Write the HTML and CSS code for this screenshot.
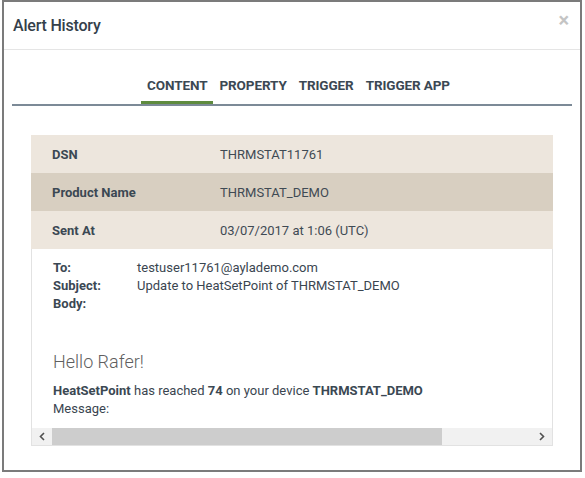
FILE: index.html
```html
<!DOCTYPE html>
<html lang="en">
<head>
    <meta charset="UTF-8">
    <title>Alert History</title>
    <link rel="stylesheet" href="styles.css">
</head>
<body>
    <div class="modal">
        <div class="modal-header">
            <h2>Alert History</h2>
            <span class="close">&times;</span>
        </div>

        <div class="modal-body">
            <!-- tabs -->
            <ul class="tabs">
                <li class="active">CONTENT</li>
                <li>PROPERTY</li>
                <li>TRIGGER</li>
                <li>TRIGGER APP</li>
            </ul>

            <div class="details">
                <div class="row">
                    <div class="label">DSN</div>
                    <div class="value">THRMSTAT11761</div>
                </div>
                <div class="row dark">
                    <div class="label">Product Name</div>
                    <div class="value">THRMSTAT_DEMO</div>
                </div>
                <div class="row">
                    <div class="label">Sent At</div>
                    <div class="value">03/07/2017 at 1:06 (UTC)</div>
                </div>

                <!-- email preview -->
                <div class="email">
                    <div class="email-content">
                        <div class="field"><span class="f-label">To:</span><span>testuser11761@aylademo.com</span></div>
                        <div class="field"><span class="f-label">Subject:</span><span>Update to HeatSetPoint of THRMSTAT_DEMO</span></div>
                        <div class="field"><span class="f-label">Body:</span></div>

                        <div class="greeting">Hello Rafer!</div>
                        <p class="line"><strong>HeatSetPoint</strong> has reached <strong>74</strong> on your device <strong>THRMSTAT_DEMO</strong></p>
                        <p class="line">Message:</p>
                    </div>
                    <div class="scrollbar">
                        <div class="arrow">
                            <svg width="6" height="9" viewBox="0 0 6 9"><polyline points="5,1 1.5,4.5 5,8" fill="none" stroke="#505050" stroke-width="1.6"/></svg>
                        </div>
                        <div class="track"><div class="thumb"></div></div>
                        <div class="arrow">
                            <svg width="6" height="9" viewBox="0 0 6 9"><polyline points="1,1 4.5,4.5 1,8" fill="none" stroke="#505050" stroke-width="1.6"/></svg>
                        </div>
                    </div>
                </div>
            </div>
        </div>
    </div>
</body>
</html>
```

FILE: styles.css
```css
body {
    margin: 0;
    background: #fff;
    font-family: 'Roboto', 'Liberation Sans', sans-serif;
    color: #3a4550;
}
.modal {
    margin-left: 2px;
    width: 580px;
    height: 472px;
    border: 2px solid #7b7b7b;
    box-sizing: border-box;
    background: #fff;
}
.modal-header {
    height: 47px;
    padding: 0 9px;
    border-bottom: 1px solid #e5e5e5;
    display: flex;
    align-items: center;
    justify-content: space-between;
}
.modal-header h2 {
    margin: 0;
    font-size: 16px;
    font-weight: 500;
    color: #34404a;
    letter-spacing: -0.2px;
}
.close {
    font-size: 20px;
    font-weight: bold;
    color: #c4c4c4;
    margin-top: -11px;
    margin-right: 2px;
}
.modal-body {
    padding: 0 8px;
}
.tabs {
    list-style: none;
    margin: 0;
    padding: 26px 0 0 13px;
    display: flex;
    justify-content: center;
    border-bottom: 2px solid #7c8a97;
}
.tabs li {
    padding: 0 6px 7px;
    font-size: 13.5px;
    line-height: 18px;
    font-weight: bold;
    letter-spacing: -0.1px;
    color: #3b4853;
    border-bottom: 3px solid transparent;
}
.tabs li.active {
    border-bottom-color: #5e8b3e;
}
.details {
    margin: 29px 19px 0;
    font-size: 13px;
}
.row {
    display: flex;
    height: 38px;
    align-items: center;
    background: #ede6dd;
}
.row.dark {
    background: #d8cfc1;
}
.label {
    width: 168px;
    padding-left: 21px;
    font-weight: bold;
    color: #3b4853;
}
.value {
    color: #3f4a54;
}
.email {
    border: 1px solid #e2e2e2;
    border-top: none;
}
.email-content {
    padding: 10px 21px 10px;
    line-height: 18px;
}
.field {
    display: flex;
}
.f-label {
    width: 84px;
    font-weight: bold;
    color: #3b4853;
}
.greeting {
    margin-top: 38px;
    font-size: 18px;
    line-height: 22px;
    font-weight: 300;
    color: #5f5f5f;
}
.line {
    margin: 0;
}
.greeting + .line {
    margin-top: 9px;
}
.line strong {
    color: #3b4853;
}
.scrollbar {
    display: flex;
    height: 17px;
    background: #f1f1f1;
}
.arrow {
    width: 20px;
    display: flex;
    align-items: center;
    justify-content: center;
}
.track {
    flex: 1;
    margin-right: 90px;
}
.thumb {
    height: 100%;
    background: #cdcdcd;
}
```
